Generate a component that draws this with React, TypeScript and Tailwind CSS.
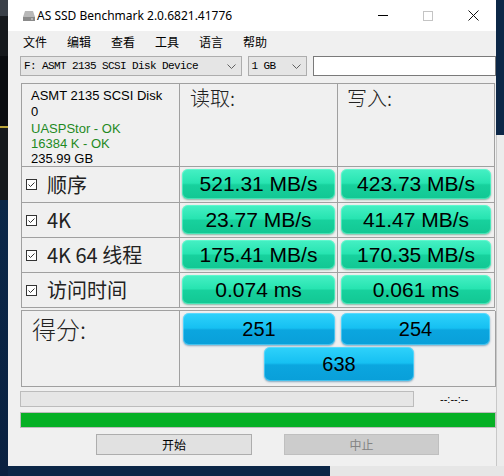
import React from "react";

const ui = { fontFamily: '"Segoe UI", "Noto Sans", "Noto Sans CJK SC", sans-serif' };
const cjk = { fontFamily: '"Noto Sans CJK SC", "Noto Sans", sans-serif' };
const arial = { fontFamily: '"Liberation Sans", Arial, "Noto Sans CJK SC", sans-serif' };
const mono = { fontFamily: '"Liberation Mono", "Courier New", monospace' };

const green =
  "rounded-[6px] bg-[linear-gradient(to_bottom,#46f0c4_0%,#27e4b1_47%,#17d19d_53%,#12c793_100%)] shadow-[0_1px_2px_rgba(0,110,70,0.45),inset_0_0_0_1px_rgba(120,255,215,0.5)]";
const blue =
  "rounded-[6px] bg-[linear-gradient(to_bottom,#2fd2fb_0%,#16c0f2_47%,#0ba6df_53%,#099fd9_100%)] shadow-[0_1px_2px_rgba(0,80,130,0.45),inset_0_0_0_1px_rgba(130,225,255,0.5)]";

function Chevron() {
  return (
    <svg width="9" height="5" viewBox="0 0 9 5">
      <path d="M0.5 0.5 L4.5 4.5 L8.5 0.5" fill="none" stroke="#606060" strokeWidth="1" />
    </svg>
  );
}

function Check() {
  return (
    <svg width="11" height="11" viewBox="0 0 11 11" className="shrink-0">
      <rect x="0.5" y="0.5" width="10" height="10" fill="#fff" stroke="#333" />
      <path d="M2.5 5.5 L4.5 7.5 L8.5 3.5" fill="none" stroke="#333" strokeWidth="1" />
    </svg>
  );
}

function Bar({ value, kind, className }: { value: string; kind: "g" | "b"; className?: string }) {
  return (
    <div
      className={`flex h-full items-center justify-center text-black ${kind === "g" ? green + " text-[21px]" : blue + " text-[20px]"} ${className ?? ""}`}
      style={arial}
    >
      {value}
    </div>
  );
}

const rows = [
  { label: "顺序", read: "521.31 MB/s", write: "423.73 MB/s", h: "h-[36px]" },
  { label: "4K", read: "23.77 MB/s", write: "41.47 MB/s", h: "h-[35px]" },
  { label: "4K 64 线程", read: "175.41 MB/s", write: "170.35 MB/s", h: "h-[35px]" },
  { label: "访问时间", read: "0.074 ms", write: "0.061 ms", h: "h-[35px]" },
];

const menus = ["文件", "编辑", "查看", "工具", "语言", "帮助"];

export default function App() {
  return (
    <div className="relative h-[476px] w-[504px] overflow-hidden bg-[#0c2747]">
      {/* desktop behind */}
      <div className="absolute left-0 top-0 h-[200px] w-[8px] bg-[#16191d]">
        <div className="h-[16px] bg-[#3a4048]" />
        <div className="mt-[40px] h-[70px] bg-[#0a0c10]" />
        <div className="h-[2px] bg-[#b9a33a]" />
      </div>
      <div className="absolute left-0 top-[200px] h-[276px] w-[8px] bg-[linear-gradient(to_bottom,#0b2748,#0a2140)]" />
      <div className="absolute right-0 top-[135px] h-[341px] w-[8px] border-l border-[#c8c8c8] bg-[#ececec]" />
      <div className="absolute bottom-0 left-[330px] h-[10px] w-[174px] bg-[#e6e6e6]" />

      {/* window */}
      <div className="absolute left-[8px] top-0 flex h-[466px] w-[488px] flex-col bg-[#f0f0f0]" style={ui}>
        {/* title bar */}
        <div className="flex h-[31px] items-center bg-white">
          <svg width="14" height="12" viewBox="0 0 14 12" className="ml-[14px]">
            <path d="M3 1 H11 L13 7 H1 Z" fill="#b8b8b8" />
            <rect x="1" y="7" width="12" height="4" fill="#8a8a8a" />
            <rect x="9" y="8.5" width="2" height="1" fill="#e0e0e0" />
          </svg>
          <span className="ml-[1px] text-[12px] text-black">AS SSD Benchmark 2.0.6821.41776</span>
          <div className="ml-auto flex h-full">
            <div className="flex w-[45px] items-center justify-center">
              <div className="h-px w-[10px] bg-black" />
            </div>
            <div className="flex w-[45px] items-center justify-center">
              <div className="h-[10px] w-[10px] border border-[#c4c4c4]" />
            </div>
            <div className="flex w-[46px] items-center justify-center">
              <svg width="11" height="11" viewBox="0 0 11 11">
                <path d="M0.5 0.5 L10.5 10.5 M10.5 0.5 L0.5 10.5" stroke="#111" strokeWidth="1" />
              </svg>
            </div>
          </div>
        </div>

        {/* menu */}
        <div className="flex h-[22px] items-center pl-[15px] text-[12px] text-black" style={cjk}>
          {menus.map((m) => (
            <span key={m} className="w-[44px]">
              {m}
            </span>
          ))}
        </div>

        {/* combos */}
        <div className="mt-[3px] flex h-[20px] items-stretch pl-[12px]">
          <div className="flex w-[222px] items-center border border-[#adadad] bg-[#e5e5e5] pl-[3px] pr-[5px]">
            <span className="text-[11px] tracking-[-0.6px] text-black" style={mono}>
              F: ASMT 2135 SCSI Disk Device
            </span>
            <span className="ml-auto">
              <Chevron />
            </span>
          </div>
          <div className="ml-[6px] flex w-[60px] items-center border border-[#adadad] bg-[#e5e5e5] pl-[3px] pr-[5px]">
            <span className="text-[11px] tracking-[-0.6px] text-black" style={mono}>
              1 GB
            </span>
            <span className="ml-auto">
              <Chevron />
            </span>
          </div>
          <div className="ml-[6px] w-[183px] border border-[#7a7a7a] bg-white" />
        </div>

        {/* results */}
        <div className="ml-[13px] mt-[7px] grid w-[474px] grid-cols-[158px_158px_157px] border-l border-t border-[#a0a0a0]">
          <div className="flex h-[83px] flex-col border-b border-r border-[#a0a0a0] pl-[9px] pt-[4px] text-[13px] text-black" style={arial}>
            <div className="h-[15px] leading-[15px]">ASMT 2135 SCSI Disk</div>
            <div className="h-[18px] leading-[18px]">0</div>
            <div className="h-[15px] leading-[15px] text-[#1f8a1f]">UASPStor - OK</div>
            <div className="h-[15px] leading-[15px] text-[#1f8a1f]">16384 K - OK</div>
            <div className="h-[15px] leading-[15px]">235.99 GB</div>
          </div>
          <div className="h-[83px] border-b border-r border-[#a0a0a0] pl-[10px] pt-[1px] text-[20px] font-light leading-[26px] text-[#222]" style={cjk}>
            读取:
          </div>
          <div className="h-[83px] border-b border-r border-[#a0a0a0] pl-[9px] pt-[1px] text-[20px] font-light leading-[26px] text-[#222]" style={cjk}>
            写入:
          </div>
          {rows.map((r) => (
            <React.Fragment key={r.label}>
              <div className={`${r.h} flex items-center gap-[10px] border-b border-r border-[#a0a0a0] pl-[4px]`}>
                <Check />
                <span className="text-[20px] text-[#222]" style={cjk}>
                  {r.label}
                </span>
              </div>
              <div className={`${r.h} border-b border-r border-[#a0a0a0] px-[2px] pb-[3px] pt-[2px]`}>
                <Bar value={r.read} kind="g" />
              </div>
              <div className={`${r.h} border-b border-r border-[#a0a0a0] pb-[3px] pl-[3px] pr-[3px] pt-[2px]`}>
                <Bar value={r.write} kind="g" />
              </div>
            </React.Fragment>
          ))}
        </div>

        {/* score */}
        <div className="ml-[13px] mt-[2px] grid h-[77px] w-[474px] grid-cols-[158px_316px] border-l border-t border-[#a0a0a0]">
          <div className="border-b border-r border-[#a0a0a0] pl-[10px] pt-[2px] text-[24px] font-light leading-[32px] text-[#222]" style={cjk}>
            得分:
          </div>
          <div className="flex flex-col gap-[2px] border-b border-r border-[#a0a0a0] pt-[2px]">
            <div className="flex h-[32px] gap-[6px] pl-[3px]">
              <Bar value="251" kind="b" className="w-[152px]" />
              <Bar value="254" kind="b" className="w-[149px]" />
            </div>
            <div className="flex h-[34px] pl-[84px]">
              <Bar value="638" kind="b" className="w-[150px]" />
            </div>
          </div>
        </div>

        {/* progress */}
        <div className="ml-[12px] mt-[4px] flex h-[16px] items-center">
          <div className="h-full w-[394px] border border-[#bcbcbc] bg-[#e6e6e6]" />
          <span className="ml-[26px] text-[11px] text-black" style={arial}>
            --:--:--
          </span>
        </div>
        <div className="ml-[12px] mt-[5px] h-[16px] w-[476px] border border-[#bcbcbc] bg-[#06b025]" />

        {/* buttons */}
        <div className="ml-[88px] mt-[6px] flex h-[21px] gap-[32px] text-[12px]" style={cjk}>
          <div className="flex w-[156px] items-center justify-center border border-[#adadad] bg-[#e1e1e1] text-black">
            开始
          </div>
          <div className="flex w-[155px] items-center justify-center border border-[#bfbfbf] bg-[#cccccc] text-[#838383]">
            中止
          </div>
        </div>
      </div>
    </div>
  );
}
